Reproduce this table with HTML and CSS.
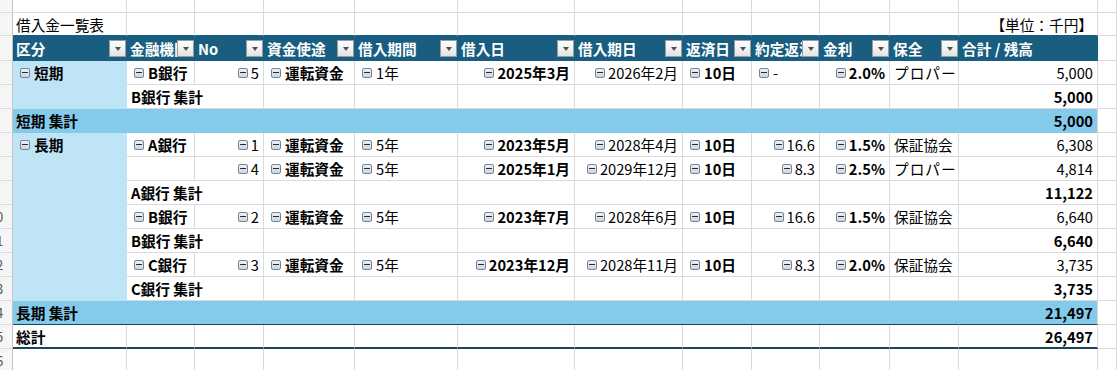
FILE: index.html
```html
<!DOCTYPE html>
<html lang="ja">
<head>
<meta charset="utf-8">
<title>借入金一覧表</title>
<link rel="stylesheet" href="styles.css">
</head>
<body>
<div class="sheet">
  <div class="row r1">
    <div class="c rh"></div>
    <div class="c"></div><div class="c"></div><div class="c"></div><div class="c"></div><div class="c"></div><div class="c"></div><div class="c"></div><div class="c"></div><div class="c"></div><div class="c"></div><div class="c"></div><div class="c"></div><div class="c"></div>
  </div>
  <div class="row r2">
    <div class="c rh"></div>
    <div class="c t">借入金一覧表</div><div class="c t"></div><div class="c t"></div><div class="c t"></div><div class="c t"></div><div class="c t"></div><div class="c t"></div><div class="c t"></div><div class="c t"></div><div class="c t"></div><div class="c t"></div><div class="c t r">【単位：千円】</div><div class="c"></div>
  </div>
  <div class="row r3">
    <div class="c rh"></div>
    <div class="c h"><span class="ht">区分</span><span class="dd"></span></div>
    <div class="c h"><span class="ht">金融機関</span><span class="dd"></span></div>
    <div class="c h"><span class="ht">No</span><span class="dd"></span></div>
    <div class="c h"><span class="ht">資金使途</span><span class="dd"></span></div>
    <div class="c h"><span class="ht">借入期間</span><span class="dd"></span></div>
    <div class="c h"><span class="ht">借入日</span><span class="dd"></span></div>
    <div class="c h"><span class="ht">借入期日</span><span class="dd"></span></div>
    <div class="c h"><span class="ht">返済日</span><span class="dd"></span></div>
    <div class="c h"><span class="ht">約定返済</span><span class="dd"></span></div>
    <div class="c h"><span class="ht">金利</span><span class="dd"></span></div>
    <div class="c h"><span class="ht">保全</span><span class="dd"></span></div>
    <div class="c h"><span class="ht">合計 / 残高</span></div>
    <div class="c"></div>
  </div>
  <div class="row">
    <div class="c rh"></div>
    <div class="c ka b"><span class="ex"></span>短期</div>
    <div class="c b"><span class="ex"></span>B銀行</div>
    <div class="c r"><span class="ex"></span>5</div>
    <div class="c b"><span class="ex"></span>運転資金</div>
    <div class="c"><span class="ex"></span>1年</div>
    <div class="c r b"><span class="ex"></span>2025年3月</div>
    <div class="c r"><span class="ex"></span>2026年2月</div>
    <div class="c b"><span class="ex"></span>10日</div>
    <div class="c"><span class="ex"></span>-</div>
    <div class="c r b"><span class="ex"></span>2.0%</div>
    <div class="c kata">プロパー</div>
    <div class="c r">5,000</div>
    <div class="c"></div>
  </div>
  <div class="row">
    <div class="c rh"></div>
    <div class="c ka"></div>
    <div class="c s2 b">B銀行 集計</div>
    <div class="c"></div><div class="c"></div><div class="c"></div><div class="c"></div><div class="c"></div><div class="c"></div><div class="c"></div><div class="c"></div>
    <div class="c r b">5,000</div>
    <div class="c"></div>
  </div>
  <div class="row">
    <div class="c rh"></div>
    <div class="c band s11 b">短期 集計</div>
    <div class="c band last r b">5,000</div>
    <div class="c"></div>
  </div>
  <div class="row">
    <div class="c rh"></div>
    <div class="c ka b"><span class="ex"></span>長期</div>
    <div class="c b"><span class="ex"></span>A銀行</div>
    <div class="c r"><span class="ex"></span>1</div>
    <div class="c b"><span class="ex"></span>運転資金</div>
    <div class="c"><span class="ex"></span>5年</div>
    <div class="c r b"><span class="ex"></span>2023年5月</div>
    <div class="c r"><span class="ex"></span>2028年4月</div>
    <div class="c b"><span class="ex"></span>10日</div>
    <div class="c r"><span class="ex"></span>16.6</div>
    <div class="c r b"><span class="ex"></span>1.5%</div>
    <div class="c">保証協会</div>
    <div class="c r">6,308</div>
    <div class="c"></div>
  </div>
  <div class="row">
    <div class="c rh"></div>
    <div class="c ka"></div>
    <div class="c"></div>
    <div class="c r"><span class="ex"></span>4</div>
    <div class="c b"><span class="ex"></span>運転資金</div>
    <div class="c"><span class="ex"></span>5年</div>
    <div class="c r b"><span class="ex"></span>2025年1月</div>
    <div class="c r"><span class="ex"></span>2029年12月</div>
    <div class="c b"><span class="ex"></span>10日</div>
    <div class="c r"><span class="ex"></span>8.3</div>
    <div class="c r b"><span class="ex"></span>2.5%</div>
    <div class="c kata">プロパー</div>
    <div class="c r">4,814</div>
    <div class="c"></div>
  </div>
  <div class="row">
    <div class="c rh"></div>
    <div class="c ka"></div>
    <div class="c s2 b">A銀行 集計</div>
    <div class="c"></div><div class="c"></div><div class="c"></div><div class="c"></div><div class="c"></div><div class="c"></div><div class="c"></div><div class="c"></div>
    <div class="c r b">11,122</div>
    <div class="c"></div>
  </div>
  <div class="row">
    <div class="c rh"><span class="n">10</span></div>
    <div class="c ka"></div>
    <div class="c b"><span class="ex"></span>B銀行</div>
    <div class="c r"><span class="ex"></span>2</div>
    <div class="c b"><span class="ex"></span>運転資金</div>
    <div class="c"><span class="ex"></span>5年</div>
    <div class="c r b"><span class="ex"></span>2023年7月</div>
    <div class="c r"><span class="ex"></span>2028年6月</div>
    <div class="c b"><span class="ex"></span>10日</div>
    <div class="c r"><span class="ex"></span>16.6</div>
    <div class="c r b"><span class="ex"></span>1.5%</div>
    <div class="c">保証協会</div>
    <div class="c r">6,640</div>
    <div class="c"></div>
  </div>
  <div class="row">
    <div class="c rh"><span class="n">11</span></div>
    <div class="c ka"></div>
    <div class="c s2 b">B銀行 集計</div>
    <div class="c"></div><div class="c"></div><div class="c"></div><div class="c"></div><div class="c"></div><div class="c"></div><div class="c"></div><div class="c"></div>
    <div class="c r b">6,640</div>
    <div class="c"></div>
  </div>
  <div class="row">
    <div class="c rh"><span class="n">12</span></div>
    <div class="c ka"></div>
    <div class="c b"><span class="ex"></span>C銀行</div>
    <div class="c r"><span class="ex"></span>3</div>
    <div class="c b"><span class="ex"></span>運転資金</div>
    <div class="c"><span class="ex"></span>5年</div>
    <div class="c r b"><span class="ex"></span>2023年12月</div>
    <div class="c r"><span class="ex"></span>2028年11月</div>
    <div class="c b"><span class="ex"></span>10日</div>
    <div class="c r"><span class="ex"></span>8.3</div>
    <div class="c r b"><span class="ex"></span>2.0%</div>
    <div class="c">保証協会</div>
    <div class="c r">3,735</div>
    <div class="c"></div>
  </div>
  <div class="row">
    <div class="c rh"><span class="n">13</span></div>
    <div class="c ka"></div>
    <div class="c s2 b">C銀行 集計</div>
    <div class="c"></div><div class="c"></div><div class="c"></div><div class="c"></div><div class="c"></div><div class="c"></div><div class="c"></div><div class="c"></div>
    <div class="c r b">3,735</div>
    <div class="c"></div>
  </div>
  <div class="row r14">
    <div class="c rh"><span class="n">14</span></div>
    <div class="c band s11 b">長期 集計</div>
    <div class="c band last r b">21,497</div>
    <div class="c"></div>
  </div>
  <div class="row r15">
    <div class="c rh"><span class="n">15</span></div>
    <div class="c g gf b">総計</div>
    <div class="c g"></div><div class="c g"></div><div class="c g"></div><div class="c g"></div><div class="c g"></div><div class="c g"></div><div class="c g"></div><div class="c g"></div><div class="c g"></div><div class="c g"></div>
    <div class="c g r b">26,497</div>
    <div class="c"></div>
  </div>
  <div class="row">
    <div class="c rh"><span class="n">16</span></div>
    <div class="c"></div><div class="c"></div><div class="c"></div><div class="c"></div><div class="c"></div><div class="c"></div><div class="c"></div><div class="c"></div><div class="c"></div><div class="c"></div><div class="c"></div><div class="c"></div><div class="c"></div>
  </div>
</div>
</body>
</html>
```
FILE: styles.css
```css
html, body {
  margin: 0;
  padding: 0;
  background: #ffffff;
  overflow: hidden;
}
body {
  width: 1117px;
  height: 370px;
  font-family: "Noto Sans CJK JP", "Noto Sans", sans-serif;
  font-size: 14.67px;
  color: #000000;
}
.sheet {
  display: flex;
  flex-direction: column;
}
.row {
  display: grid;
  grid-template-columns: 13px 114px 68px 69px 91px 103px 117px 108px 69px 68px 70px 69px 139px 1fr;
  height: 24px;
}
.r1 { height: 13px; }
.r2 { height: 23px; }
.r3 { height: 25px; }
.c {
  box-sizing: border-box;
  min-width: 0;
  display: flex;
  align-items: center;
  padding: 0 4px;
  white-space: nowrap;
  overflow: hidden;
  border-right: 1px solid #dadada;
  border-bottom: 1px solid #dadada;
}
.r { justify-content: flex-end; }
.b { font-weight: 700; }
.s2 { grid-column: span 2; }
.s11 { grid-column: span 11; }
.kata { letter-spacing: 1px; }

/* row header column */
.rh {
  padding: 0;
  background: #f6f6f6;
  border-right-color: #c4c4c4;
  border-bottom-color: #dcdcdc;
  color: #555555;
  font-size: 13px;
}
.rh .n {
  flex: none;
  width: 40px;
  margin-left: -24px;
  text-align: center;
}

/* title row */
.t { padding-left: 3px; border-bottom-color: #195e80; }

/* header band */
.h {
  background: #195e80;
  color: #ffffff;
  font-weight: 700;
  padding: 0 0 0 3px;
  border-right-color: #195e80;
  border-bottom-color: #195e80;
}
.ht {
  flex: 1 1 auto;
  min-width: 0;
  overflow: hidden;
}
.dd {
  flex: none;
  box-sizing: border-box;
  width: 17px;
  height: 17px;
  margin-top: 1px;
  border: 1px solid #9c9c9c;
  background: linear-gradient(#ffffff, #e3e3e3);
  display: flex;
  align-items: center;
  justify-content: center;
}
.dd::before {
  content: "";
  width: 0;
  height: 0;
  border-left: 3.5px solid transparent;
  border-right: 3.5px solid transparent;
  border-top: 4px solid #4d4d4d;
}

/* row label column (blue) */
.ka {
  background: #bfe4f5;
  border-right-color: #bfe4f5;
  border-bottom-color: #bfe4f5;
}

/* subtotal band */
.band {
  background: #84cbeb;
  border-right-color: #84cbeb;
  border-bottom-color: #84cbeb;
}
.band.last { border-right-color: #dadada; }
.r14 .band { border-bottom-color: #17475a; }
.s11 { padding-left: 3px; }

/* grand total */
.g { border-bottom: 2px solid #17475a; }
.gf { padding-left: 3px; }

/* expand/collapse button */
.ex {
  flex: none;
  position: relative;
  box-sizing: border-box;
  width: 10px;
  height: 10px;
  margin: 1px 4px 0 3px;
  border: 1px solid #76869d;
  border-radius: 2px;
  background: linear-gradient(#eef1f5, #ccd4df);
}
.r > .ex { margin-left: 0; margin-right: 3px; }
.ex::after {
  content: "";
  position: absolute;
  left: 1px;
  right: 1px;
  top: 3px;
  height: 1px;
  background: #2a2a2a;
}
```
